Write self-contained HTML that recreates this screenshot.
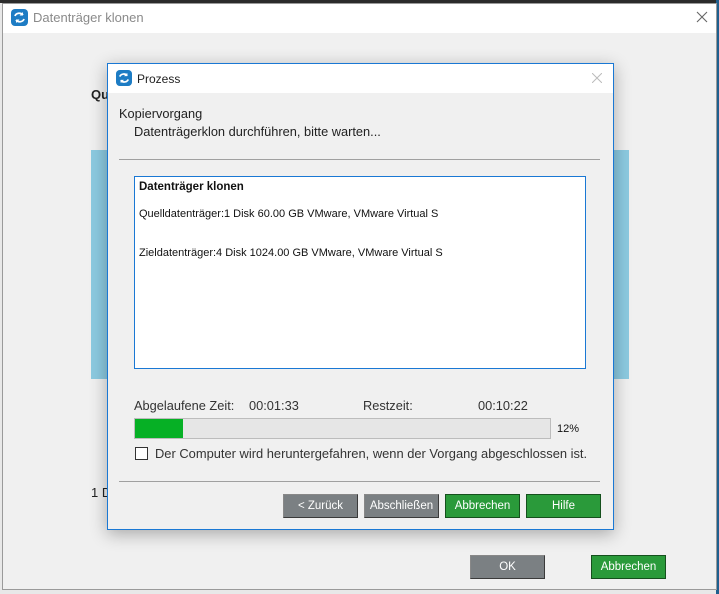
<!DOCTYPE html>
<html><head><meta charset="utf-8"><style>
*{margin:0;padding:0;box-sizing:border-box}
body{width:719px;height:594px;overflow:hidden;background:#e8e8e8;font-family:"Liberation Sans",sans-serif;position:relative}
.a{position:absolute}
.btn{position:absolute;height:24px;color:#fff;font-size:11.5px;text-align:center;line-height:22px;border:1px solid #3a3a3a;border-top-color:#888;border-left-color:#888}
.g{background:#7b8083}
.gr{background:#2a9a3a;border-color:#15501d}
</style></head><body>
<div class="a" style="left:0;top:0;width:719px;height:3px;background:#2b2b2b"></div>
<div class="a" style="left:716px;top:0;width:3px;height:594px;background:#1e5f8e"></div>
<div class="a" style="left:2px;top:3px;width:715px;height:587px;background:#f0f0f0;border:1px solid #9a9a9a"></div>
<div class="a" style="left:3px;top:4px;width:713px;height:29px;background:#fff"></div>
<svg class="a" style="left:11px;top:9px" width="17" height="17" viewBox="0 0 17 17"><rect x="0" y="0" width="17" height="17" rx="4" fill="#1d7cc4"/><path d="M4 7a4.5 4 0 0 1 8-1M13 10a4.5 4 0 0 1-8 1" stroke="#fff" stroke-width="1.8" fill="none"/><path d="M12 3v3.5h-3.5z M5 14v-3.5h3.5z" fill="#fff"/></svg>
<div class="a" style="left:33px;top:10px;font-size:13px;color:#8a8a8a">Datenträger klonen</div>
<svg class="a" style="left:696px;top:11px" width="12" height="12"><path d="M1 1L11 11M11 1L1 11" stroke="#666" stroke-width="1.1"/></svg>
<div class="a" style="left:91px;top:87px;font-size:13px;font-weight:bold;color:#222">Qu</div>
<div class="a" style="left:91px;top:150px;width:538px;height:229px;background:#8ccae0"></div>
<div class="a" style="left:91px;top:485px;font-size:13px;color:#222">1 D</div>
<div class="btn g" style="left:470px;top:555px;width:75px">OK</div>
<div class="btn gr" style="left:591px;top:555px;width:75px">Abbrechen</div>
<div class="a" style="left:107px;top:63px;width:507px;height:467px;background:#f0f0f0;border:1px solid #1a78d4;box-shadow:0 4px 16px rgba(0,0,0,.3)"></div>
<div class="a" style="left:108px;top:64px;width:505px;height:29px;background:#fff"></div>
<svg class="a" style="left:116px;top:70px" width="16" height="16" viewBox="0 0 17 17"><rect x="0" y="0" width="17" height="17" rx="4" fill="#1d7cc4"/><path d="M4 7a4.5 4 0 0 1 8-1M13 10a4.5 4 0 0 1-8 1" stroke="#fff" stroke-width="1.8" fill="none"/><path d="M12 3v3.5h-3.5z M5 14v-3.5h3.5z" fill="#fff"/></svg>
<div class="a" style="left:137px;top:72px;font-size:12px;color:#222">Prozess</div>
<svg class="a" style="left:592px;top:73px" width="10" height="10"><path d="M0 0L10 10M10 0L0 10" stroke="#bbb" stroke-width="1"/></svg>
<div class="a" style="left:119px;top:106px;font-size:12.8px;color:#222">Kopiervorgang</div>
<div class="a" style="left:134px;top:124px;font-size:12.8px;color:#222">Datenträgerklon durchführen, bitte warten...</div>
<div class="a" style="left:119px;top:159px;width:481px;height:1px;background:#a0a0a0"></div>
<div class="a" style="left:134px;top:176px;width:452px;height:193px;background:#fff;border:1px solid #1a78d4"></div>
<div class="a" style="left:139px;top:181px;font-size:11.5px;font-weight:bold;color:#111">Datenträger klonen</div>
<div class="a" style="left:139px;top:208px;font-size:11px;color:#111">Quelldatenträger:1 Disk 60.00 GB VMware, VMware Virtual S</div>
<div class="a" style="left:139px;top:247px;font-size:11px;color:#111">Zieldatenträger:4 Disk 1024.00 GB VMware, VMware Virtual S</div>
<div class="a" style="left:134px;top:398px;font-size:12.8px;color:#333">Abgelaufene Zeit:</div>
<div class="a" style="left:249px;top:398px;font-size:12.8px;color:#333">00:01:33</div>
<div class="a" style="left:363px;top:398px;font-size:12.8px;color:#333">Restzeit:</div>
<div class="a" style="left:478px;top:398px;font-size:12.8px;color:#333">00:10:22</div>
<div class="a" style="left:134px;top:418px;width:417px;height:21px;background:#e6e6e6;border:1px solid #bcbcbc"></div>
<div class="a" style="left:135px;top:419px;width:48px;height:19px;background:#06b025"></div>
<div class="a" style="left:557px;top:423px;font-size:11px;color:#111">12%</div>
<div class="a" style="left:135px;top:447px;width:13px;height:13px;background:#fff;border:1px solid #333"></div>
<div class="a" style="left:155px;top:446px;font-size:12.9px;color:#333">Der Computer wird heruntergefahren, wenn der Vorgang abgeschlossen ist.</div>
<div class="a" style="left:119px;top:481px;width:481px;height:1px;background:#a0a0a0"></div>
<div class="btn g" style="left:283px;top:494px;width:75px">&lt; Zurück</div>
<div class="btn g" style="left:364px;top:494px;width:75px">Abschließen</div>
<div class="btn gr" style="left:445px;top:494px;width:75px">Abbrechen</div>
<div class="btn gr" style="left:526px;top:494px;width:75px">Hilfe</div>
</body></html>
